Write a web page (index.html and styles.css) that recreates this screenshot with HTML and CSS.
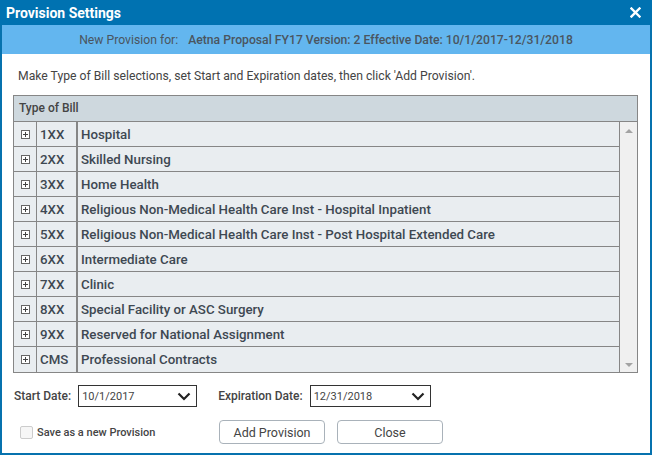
FILE: index.html
```html
<!DOCTYPE html>
<html lang="en">
<head>
    <meta charset="UTF-8">
    <title>Provision Settings</title>
    <link rel="stylesheet" href="styles.css">
</head>
<body>
    <div class="dialog">
        <div class="title-bar">
            <span class="title">Provision Settings</span>
            <svg class="close-x" width="11" height="11" viewBox="0 0 11 11"><path d="M1.5 1.5 L9.5 9.5 M9.5 1.5 L1.5 9.5" stroke="#fff" stroke-width="2.4" stroke-linecap="square"/></svg>
        </div>
        <div class="sub-header">
            <span class="sub-label">New Provision for:</span>
            <span class="sub-value">Aetna Proposal FY17 Version: 2 Effective Date: 10/1/2017-12/31/2018</span>
        </div>

        <div class="content">
            <p class="hint">Make Type of Bill selections, set Start and Expiration dates, then click 'Add Provision'.</p>

            <div class="grid">
                <div class="grid-header">Type of Bill</div>
                <div class="grid-body">
                    <div class="rows">
                        <div class="row"><span class="expander"><i></i></span><span class="code">1XX</span><span class="desc">Hospital</span></div>
                        <div class="row"><span class="expander"><i></i></span><span class="code">2XX</span><span class="desc">Skilled Nursing</span></div>
                        <div class="row"><span class="expander"><i></i></span><span class="code">3XX</span><span class="desc">Home Health</span></div>
                        <div class="row"><span class="expander"><i></i></span><span class="code">4XX</span><span class="desc">Religious Non-Medical Health Care Inst - Hospital Inpatient</span></div>
                        <div class="row"><span class="expander"><i></i></span><span class="code">5XX</span><span class="desc">Religious Non-Medical Health Care Inst - Post Hospital Extended Care</span></div>
                        <div class="row"><span class="expander"><i></i></span><span class="code">6XX</span><span class="desc">Intermediate Care</span></div>
                        <div class="row"><span class="expander"><i></i></span><span class="code">7XX</span><span class="desc">Clinic</span></div>
                        <div class="row"><span class="expander"><i></i></span><span class="code">8XX</span><span class="desc">Special Facility or ASC Surgery</span></div>
                        <div class="row"><span class="expander"><i></i></span><span class="code">9XX</span><span class="desc">Reserved for National Assignment</span></div>
                        <div class="row last"><span class="expander"><i></i></span><span class="code">CMS</span><span class="desc">Professional Contracts</span></div>
                    </div>
                    <div class="scrollbar">
                        <span class="arrow up"></span>
                        <span class="arrow down"></span>
                    </div>
                </div>
            </div>

            <div class="dates">
                <label class="field-label">Start Date:</label>
                <div class="select start">
                    <span>10/1/2017</span>
                    <svg width="14" height="9" viewBox="0 0 14 9"><path d="M1.5 1.5 L7 7 L12.5 1.5" fill="none" stroke="#222" stroke-width="2.2"/></svg>
                </div>
                <label class="field-label exp">Expiration Date:</label>
                <div class="select end">
                    <span>12/31/2018</span>
                    <svg width="14" height="9" viewBox="0 0 14 9"><path d="M1.5 1.5 L7 7 L12.5 1.5" fill="none" stroke="#222" stroke-width="2.2"/></svg>
                </div>
            </div>

            <div class="actions">
                <label class="save-new"><span class="checkbox"></span>Save as a new Provision</label>
                <button class="btn add">Add Provision</button>
                <button class="btn">Close</button>
            </div>
        </div>
    </div>
</body>
</html>
```

FILE: styles.css
```css
html, body {
    margin: 0;
    padding: 0;
}
body {
    font-family: Roboto, 'Liberation Sans', sans-serif;
    background-color: #fff;
    color: #444;
}
.dialog {
    width: 648px;
    height: 453px;
    border: 2px solid #0672ae;
    border-top: none;
    background-color: #fff;
}
.title-bar {
    height: 25px;
    background-color: #0072b1;
    color: #fff;
    display: flex;
    align-items: center;
    justify-content: space-between;
    padding: 0 11px 0 6px;
    margin: 0 -2px;
}
.title {
    font-size: 14px;
    font-weight: bold;
}
.sub-header {
    height: 29px;
    background-color: #63b6ef;
    display: flex;
    align-items: center;
    justify-content: center;
    gap: 10px;
    font-size: 12.2px;
    color: #4a5560;
}
.sub-value {
    font-weight: 500;
}
.content {
    padding: 0 0 0 11px;
}
.hint {
    margin: 15px 0 12px 5px;
    font-size: 12.2px;
    color: #444;
}
.grid {
    width: 623px;
    border: 1px solid #868686;
}
.grid-header {
    height: 25px;
    line-height: 25px;
    background-color: #ced8de;
    border-bottom: 1px solid #868686;
    padding-left: 5px;
    font-size: 12px;
    font-weight: 500;
    color: #444;
}
.grid-body {
    display: flex;
}
.rows {
    flex: 1;
}
.row {
    display: flex;
    height: 24px;
    border-bottom: 1px solid #868686;
    background-color: #e9edf0;
    font-size: 13.3px;
    font-weight: 500;
    color: #3e4852;
}
.row.last {
    border-bottom: none;
    height: 25px;
}
.row span {
    display: flex;
    align-items: center;
}
.expander {
    width: 22px;
    justify-content: center;
    border-right: 1px solid #868686;
}
.expander i {
    display: block;
    position: relative;
    width: 9px;
    height: 9px;
    border: 1px solid #666;
    background-color: #fff;
    box-sizing: border-box;
}
.expander i::before,
.expander i::after {
    content: "";
    position: absolute;
    background-color: #444;
}
.expander i::before {
    left: 1px;
    right: 1px;
    top: 3px;
    height: 1px;
}
.expander i::after {
    top: 1px;
    bottom: 1px;
    left: 3px;
    width: 1px;
}
.code {
    width: 36px;
    padding-left: 3px;
    border-right: 2px solid #868686;
}
.desc {
    padding-left: 3px;
}
.scrollbar {
    width: 17px;
    border-left: 1px solid #868686;
    background-color: #f0f0f0;
    display: flex;
    flex-direction: column;
    justify-content: space-between;
    align-items: center;
    padding: 7px 0 5px;
}
.arrow {
    width: 0;
    height: 0;
    border-left: 4px solid transparent;
    border-right: 4px solid transparent;
}
.arrow.up {
    border-bottom: 4px solid #a3a3a3;
}
.arrow.down {
    border-top: 4px solid #a3a3a3;
}
.dates {
    display: flex;
    align-items: center;
    margin-top: 12px;
    padding-left: 1px;
}
.field-label {
    font-size: 12px;
    font-weight: 500;
    color: #444;
    margin-right: 7px;
}
.field-label.exp {
    margin-left: 21px;
}
.select {
    display: flex;
    align-items: center;
    justify-content: space-between;
    height: 20px;
    border: 1px solid #333;
    padding: 0 5px 0 3px;
    font-size: 11px;
    color: #444;
    box-sizing: content-box;
}
.select.start {
    width: 109px;
}
.select.end {
    width: 111px;
}
.actions {
    display: flex;
    align-items: center;
    margin-top: 13px;
    padding-left: 7px;
}
.save-new {
    display: flex;
    align-items: center;
    font-size: 11px;
    font-weight: 500;
    color: #444;
    width: 199px;
}
.checkbox {
    width: 11px;
    height: 11px;
    border: 1px solid #ccc;
    border-radius: 2px;
    background-color: #f6f6f6;
    margin-right: 4px;
}
.btn {
    width: 106px;
    height: 24px;
    border: 1px solid #a9b2ba;
    border-radius: 4px;
    background-color: #fff;
    font-family: Roboto, 'Liberation Sans', sans-serif;
    font-size: 12.5px;
    color: #444;
    margin-right: 12px;
    cursor: pointer;
}
```
